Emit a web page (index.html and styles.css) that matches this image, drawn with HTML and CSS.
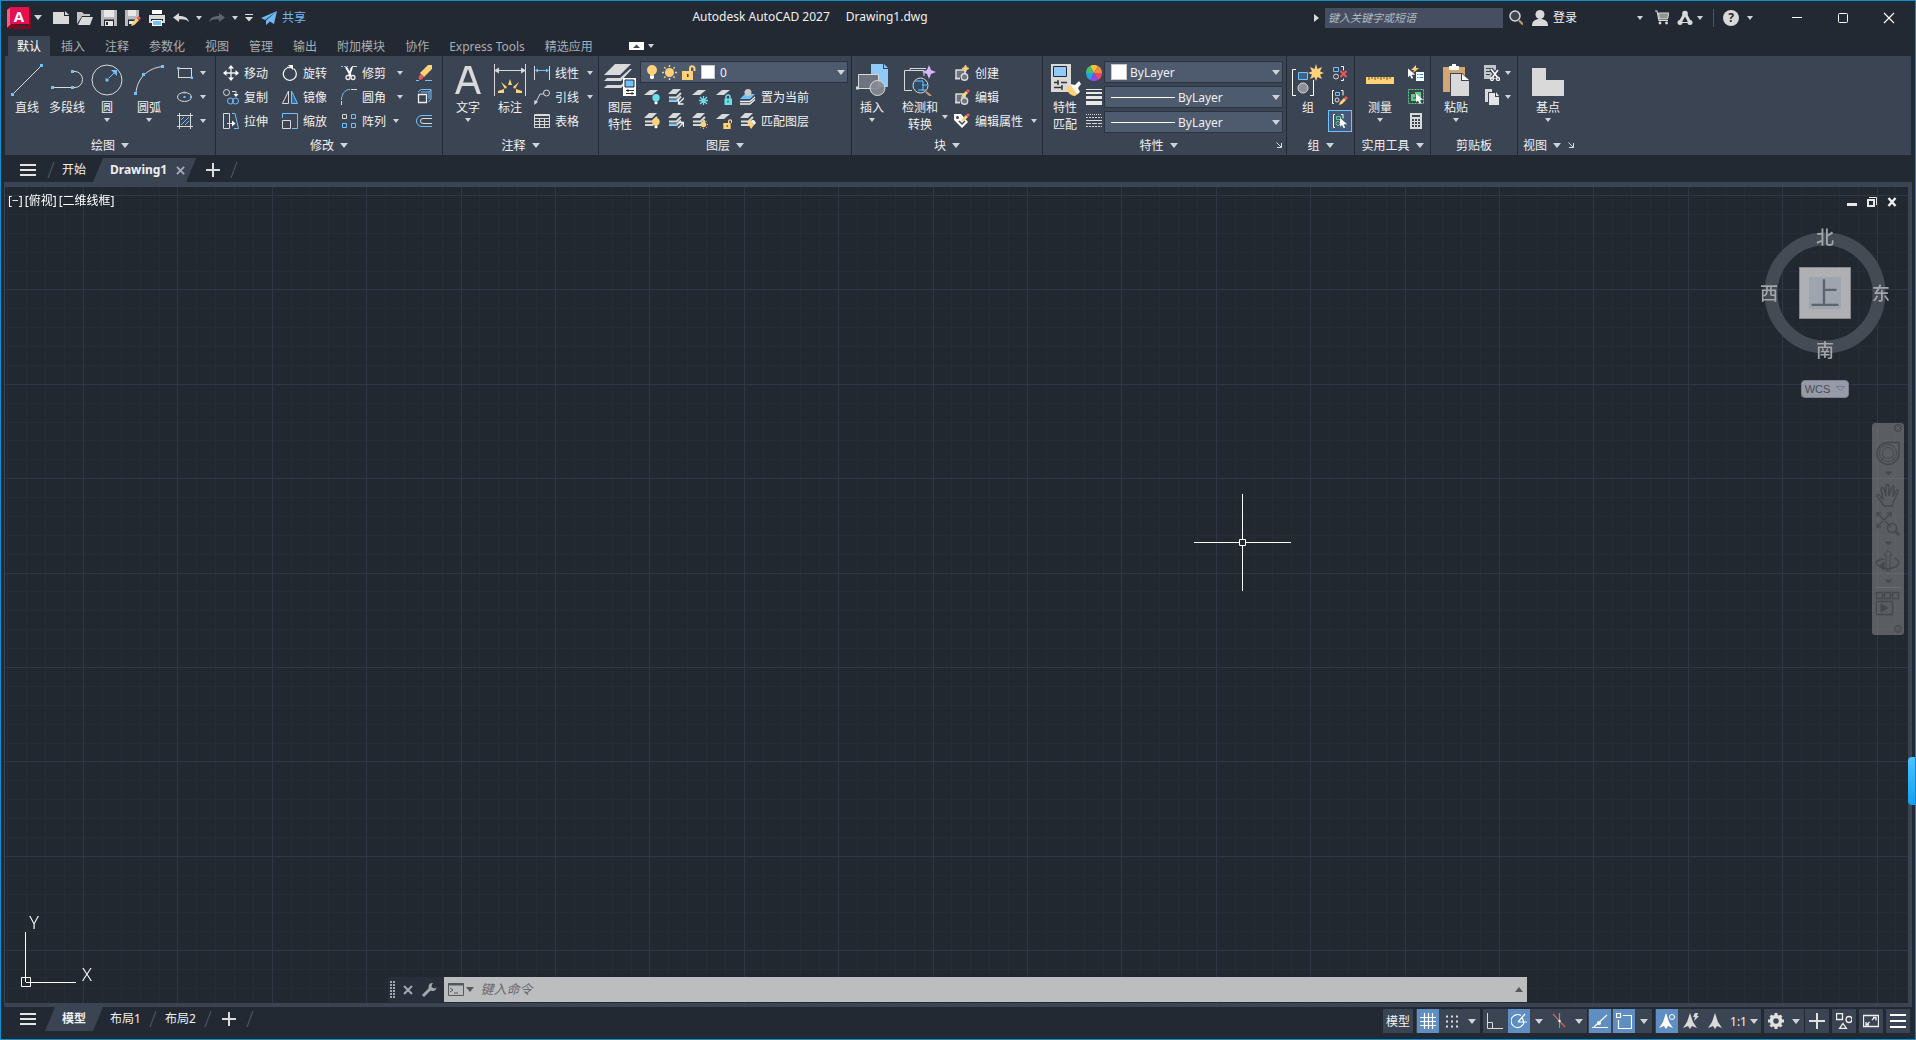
FILE: index.html
```html
<!DOCTYPE html>
<html lang="zh-CN">
<head>
<meta charset="utf-8">
<title>Autodesk AutoCAD 2027 - Drawing1.dwg</title>
<link rel="stylesheet" href="styles.css">
</head>
<body>
<svg class="defs" aria-hidden="true">
  <symbol id="caret-s" viewBox="0 0 6 4"><path d="M0 0h6L3 4z" fill="currentColor"/></symbol>
  <symbol id="caret-m" viewBox="0 0 8 5"><path d="M0 0h8L4 5z" fill="currentColor"/></symbol>
  <symbol id="slash" viewBox="0 0 8 18"><path d="M1 17L7 1" stroke="#4b5463" stroke-width="1.2"/></symbol>
  <symbol id="plus" viewBox="0 0 14 14"><path d="M7 0v14M0 7h14" stroke="#dcdcdc" stroke-width="2"/></symbol>
  <symbol id="menu" viewBox="0 0 16 12"><path d="M0 1h16M0 6h16M0 11h16" stroke="#e4e4e4" stroke-width="2"/></symbol>
  <symbol id="launch" viewBox="0 0 6 6"><path d="M.5 .5L5 5M5.500 1v4.500H1" fill="none" stroke="#dcdcdc"/></symbol>
  <symbol id="layer1" viewBox="0 0 16 16"><path d="M6 1h8L8 6H0z" fill="#d9d9d9"/></symbol>
  <symbol id="layer3" viewBox="0 0 16 16"><path d="M5 0h8L8 5H0z" fill="#d9d9d9"/><path d="M1 8.500h7.500L13 4M1 12h7.500L13 7.500" fill="none" stroke="#d9d9d9" stroke-width="2"/></symbol>
  <symbol id="bulb" viewBox="0 0 10 15"><circle cx="5" cy="5" r="5"/><path d="M3 9h4v2H3z"/><path d="M3 11h4v2l-1 1H4l-1-1z" fill="#fff"/></symbol>
  <symbol id="sun" viewBox="0 0 15 15"><circle cx="7.500" cy="7.500" r="4.500"/><path d="M7.500 0v2M7.500 13v2M0 7.500h2M13 7.500h2M2.200 2.200l1.400 1.400M11.400 11.400l1.400 1.400M12.800 2.200l-1.400 1.400M3.600 11.400l-1.400 1.400" stroke="#ffd27a" stroke-width="1.400"/></symbol>
  <symbol id="unlock" viewBox="0 0 14 15"><path d="M8 7V3.500a2 2 0 0 1 4.500 0V6" fill="none" stroke="#ffd27a" stroke-width="2"/><path d="M0 6h11v9H0z"/><path d="M5 9h1.500v3H5z" fill="#3b4453"/></symbol>
  <symbol id="cursor" viewBox="0 0 10 14"><path d="M0 0v11l2.500-2.200L4.500 13l2-1-2-4H9z" fill="#fff"/></symbol>
  <symbol id="pencil" viewBox="0 0 9 9"><path d="M0 9l1-3L5 2l2 2-4 4z" fill="#ffd27a"/><path d="M5 2l2-2 2 2-2 2z" fill="#f0555b"/></symbol>
  <symbol id="blk" viewBox="0 0 16 16"><path d="M2 13V5h9v6" fill="#6d7480" stroke="#d9d9d9" stroke-width="1.500"/><path d="M1 13.500h5" stroke="#d9d9d9" stroke-width="2"/><circle cx="10.500" cy="12" r="3.200" fill="#6d7480" stroke="#d9d9d9" stroke-width="1.400"/></symbol>
</svg>

<header class="titlebar">
  <div class="quick">
    <button class="app" aria-label="应用程序菜单">
      <svg width="24" height="22" viewBox="0 0 24 22"><path d="M0 3L4 0v18L0 21z" fill="#ff5a83"/><path d="M0 21l4-4 20 2v3H2z" fill="#7d0a25"/><path d="M21 1l3 2v17h-3z" fill="#7d0a25"/><path d="M3 0h19v17H3z" fill="#e51050"/><text x="12" y="15" text-anchor="middle" class="logo-a">A</text></svg>
      <svg class="cm"><use href="#caret-m"/></svg>
    </button>
    <button class="tool" aria-label="新建"><svg class="i16" viewBox="0 0 16 16"><path d="M0 2h11v4h5v8H0z" fill="#d9d9d9"/><path d="M12 1l4 4h-4z" fill="#d9d9d9"/></svg></button>
    <button class="tool" aria-label="打开"><svg class="i16" viewBox="0 0 16 16"><path d="M0 14V2h5l2 2h6v2H5z" fill="#c4c4c4"/><path d="M5 7h11l-3 8H1z" fill="#d9d9d9"/></svg></button>
    <button class="tool" aria-label="保存"><svg class="i16" viewBox="0 0 16 16"><path d="M0 0h16v16H0z" fill="#b9b9b9"/><path d="M3 0h10v7H3z" fill="#e8e8e8"/><path d="M3 9.500h10V16H3z" fill="#222933"/><path d="M4 11h8v5H4z" fill="#e8e8e8"/><path d="M5 12h2v3H5z" fill="#222933"/></svg></button>
    <button class="tool" aria-label="另存为"><svg class="i16" viewBox="0 0 16 16"><path d="M0 0h14v8l-6 8H0z" fill="#b9b9b9"/><path d="M3 0h8v6H3z" fill="#e8e8e8"/><path d="M3 9.500h7V16H3z" fill="#222933"/><path d="M4 11h5v3H4z" fill="#e8e8e8"/><svg x="6" y="6" width="10" height="10"><use href="#pencil"/></svg></svg></button>
    <button class="tool" aria-label="打印"><svg class="i16" viewBox="0 0 16 16"><path d="M3 0h10v4H3z" fill="#fff"/><path d="M0 5h16v8H0z" fill="#d9d9d9"/><path d="M2 9h12v2H2z" fill="#222933"/><path d="M3 10h10v6H3z" fill="#fff"/><path d="M4 11h8v4H4z" fill="#6fc1ff"/></svg></button>
    <button class="tool" aria-label="放弃"><svg class="i16" viewBox="0 0 16 16"><path d="M0 7.500L6 3v3c5 0 9 1.500 10 6-2.500-2.500-6-3-10-2.500V12z" fill="#d9d9d9"/></svg></button>
    <button class="drop" aria-label="放弃列表"><svg class="cs"><use href="#caret-s"/></svg></button>
    <button class="tool" aria-label="重做"><svg class="i16" viewBox="0 0 16 16"><path d="M16 7.500L10 3v3C5 6 1 7.500 0 12c2.500-2.500 6-3 10-2.500V12z" fill="#5f656d"/></svg></button>
    <button class="drop" aria-label="重做列表"><svg class="cs"><use href="#caret-s"/></svg></button>
    <button class="custom" aria-label="自定义"><svg width="8" height="8" viewBox="0 0 8 8"><path d="M0 .5h8" stroke="#d9d9d9"/><path d="M0 3h8L4 7.500z" fill="#d9d9d9"/></svg></button>
    <button class="share"><svg class="i16" viewBox="0 0 16 16"><path d="M16 1L0 8l4 2zM16 1L5 10.500V15l3-2.500zM16 1L8 11l5 3z" fill="#6fb9f2"/></svg>共享</button>
  </div>
  <h1 class="caption"><span>Autodesk AutoCAD 2027</span><span>Drawing1.dwg</span></h1>
  <div class="infocenter">
    <svg width="5" height="8" viewBox="0 0 5 8"><path d="M0 0l5 4-5 4z" fill="#d9d9d9"/></svg>
    <input class="search" type="text" aria-label="搜索" placeholder="键入关键字或短语">
    <button aria-label="查找"><svg width="14" height="16" viewBox="0 0 14 16"><circle cx="6" cy="6" r="5" fill="#3f4650" stroke="#d9d9d9" stroke-width="1.500"/><path d="M10 10.500l4 4" stroke="#c99b6b" stroke-width="2"/></svg></button>
    <button class="login"><svg class="i16" viewBox="0 0 16 16"><circle cx="8" cy="4.500" r="4.500" fill="#d9d9d9"/><path d="M0 16c0-5 3-7 8-7s8 2 8 7z" fill="#d9d9d9"/></svg>登录</button>
    <button class="g-auto" aria-label="登录选项"><svg class="cs"><use href="#caret-s"/></svg></button>
    <button class="g12" aria-label="商店"><svg width="14" height="15" viewBox="0 0 14 15"><path d="M0 1h2l2 9.500h9" fill="none" stroke="#d9d9d9" stroke-width="1.200"/><path d="M3.500 3H14l-1.500 6h-8z" fill="#8f9398" stroke="#d9d9d9"/><circle cx="5" cy="13" r="1.400" fill="#d9d9d9"/><circle cx="11.500" cy="13" r="1.400" fill="#d9d9d9"/></svg></button>
    <button class="g8" aria-label="Autodesk App"><svg class="i16" viewBox="0 0 16 16"><path d="M8 3.500L3 12.500M8 3.500l5 9" stroke="#d9d9d9" stroke-width="3"/><circle cx="8" cy="3.500" r="2.800" fill="#d9d9d9"/><circle cx="3" cy="12.500" r="2.500" fill="#d9d9d9"/><circle cx="13" cy="12.500" r="2.500" fill="#d9d9d9"/><path d="M3 12.500h10" stroke="#d9d9d9"/></svg></button>
    <button class="g4" aria-label="App 选项"><svg class="cs"><use href="#caret-s"/></svg></button>
    <span class="vsep"></span>
    <button class="g8" aria-label="帮助"><svg class="i16" viewBox="0 0 16 16"><circle cx="8" cy="8" r="8" fill="#d9d9d9"/><text x="8" y="12" text-anchor="middle" class="q">?</text></svg></button>
    <button class="g8" aria-label="帮助选项"><svg class="cs"><use href="#caret-s"/></svg></button>
  </div>
  <div class="winbtns">
    <button aria-label="最小化"><svg width="12" height="12" viewBox="0 0 12 12"><path d="M1 5.500h10" stroke="#fff"/></svg></button>
    <button aria-label="最大化"><svg width="12" height="12" viewBox="0 0 12 12"><rect x="1.500" y="1.500" width="9" height="9" rx="1" fill="none" stroke="#fff"/></svg></button>
    <button aria-label="关闭"><svg width="12" height="12" viewBox="0 0 12 12"><path d="M1 1l10 10M11 1L1 11" stroke="#fff" stroke-width="1.200"/></svg></button>
  </div>
</header>

<nav class="tabs">
  <button class="tab on">默认</button><button class="tab">插入</button><button class="tab">注释</button><button class="tab">参数化</button><button class="tab">视图</button><button class="tab">管理</button><button class="tab">输出</button><button class="tab">附加模块</button><button class="tab">协作</button><button class="tab">Express Tools</button><button class="tab">精选应用</button>
  <button class="mini" aria-label="最小化功能区"><svg width="15" height="8" viewBox="0 0 15 8"><path d="M0 0h15v8H0z" fill="#fff"/><path d="M4 6h7L7.500 2.500z" fill="#444b55"/></svg><svg class="cs"><use href="#caret-s"/></svg></button>
</nav>

<div class="ribbon">
  <section class="panel p-draw">
    <div class="body">
      <button class="big"><svg class="i32" viewBox="0 0 32 32"><path d="M3 29L29 3" class="w"/><path d="M0 29h3v3H0zM29 0h3v3h-3z" class="fb"/></svg><span>直线</span></button>
      <button class="big"><svg class="i32" viewBox="0 0 32 32"><path d="M3 23.500h18M21 7.500h3a7.500 8 0 0 1 0 16h-3" class="w"/><path d="M0 22h3v3H0zM20 22h3v3h-3zM20 6h3v3h-3z" class="fb"/></svg><span>多段线</span></button>
      <button class="big"><svg class="i32" viewBox="0 0 32 32"><circle cx="16" cy="16" r="15" class="w"/><path d="M18 14l7-7" class="b"/><path d="M14.500 14.500h3v3h-3zM20 6h6v6z" class="fb"/></svg><span>圆</span><svg class="cs"><use href="#caret-s"/></svg></button>
      <button class="big w44"><svg class="i32" viewBox="0 0 32 32"><path d="M3 29C4 15 14 4 30 2.500" class="w"/><path d="M1 28h3v3H1zM9 9h3v3H9zM28 1h3v3h-3z" class="fb"/></svg><span>圆弧</span><svg class="cs"><use href="#caret-s"/></svg></button>
      <div class="col lead6">
        <button class="row" aria-label="矩形"><svg class="i16" viewBox="0 0 16 16"><rect x="1.500" y="3.500" width="13" height="9" class="w"/><path d="M0 2h2.500v2.500H0zM13.500 11.500H16V14h-2.500z" class="fb"/></svg><svg class="cs"><use href="#caret-s"/></svg></button>
        <button class="row" aria-label="椭圆"><svg class="i16" viewBox="0 0 16 16"><ellipse cx="7.500" cy="8" rx="7" ry="4.500" class="w"/><path d="M6.500 2.500h2v2h-2zM6.500 7h2v2h-2zM13 7h2v2h-2z" class="fb"/></svg><svg class="cs"><use href="#caret-s"/></svg></button>
        <button class="row" aria-label="图案填充"><svg class="i16" viewBox="0 0 16 16"><path d="M2.500 0v16M13.500 0v16M0 2.500h16M0 13.500h16" class="w"/><path d="M4 7l3-3M4 12l8-8M8 12l4-4" class="b"/></svg><svg class="cs"><use href="#caret-s"/></svg></button>
      </div>
    </div>
    <button class="ptitle">绘图<svg class="cm"><use href="#caret-m"/></svg></button>
  </section>

  <section class="panel p-modify">
    <div class="body">
      <div class="col w59">
        <button class="row"><svg class="i16" viewBox="0 0 16 16"><path d="M8 2v12M2 8h12" class="w2"/><path d="M8 0l3 3.500H5zM8 16l3-3.500H5zM0 8l3.500-3v6zM16 8l-3.500-3v6z" fill="#fff"/></svg>移动</button>
        <button class="row"><svg class="i16" viewBox="0 0 16 16"><circle cx="3.500" cy="3.500" r="3" class="w"/><path d="M9 2.500h4V6" class="w"/><path d="M10.500 5h5L13 8z" fill="#fff"/><circle cx="7.500" cy="12" r="3" class="b"/><circle cx="12.500" cy="12" r="3" class="b"/></svg>复制</button>
        <button class="row"><svg class="i16" viewBox="0 0 16 16"><path d="M.500 .500h6v15h-6z" class="w"/><path d="M9 .500h3l3.500 15H11" class="b"/><path d="M4 10.500h6" class="w"/><path d="M9 7.500l3.500 3-3.500 3z" fill="#fff"/></svg>拉伸</button>
      </div>
      <div class="col w59">
        <button class="row"><svg class="i16" viewBox="0 0 16 16"><path d="M5 3A6.500 6.500 0 1 0 11.500 3.500" class="w2"/><path d="M6 0h5v5z" fill="#fff"/><path d="M5 2.500h5" class="w2"/></svg>旋转</button>
        <button class="row"><svg class="i16" viewBox="0 0 16 16"><path d="M6.500 2v12.500H.500z" class="w"/><path d="M9.500 2v12.500h6z" fill="#2f6f9f" stroke="#6fc1ff"/></svg>镜像</button>
        <button class="row"><svg class="i16" viewBox="0 0 16 16"><path d="M.500 5V.500h15v15H10" class="b"/><path d="M.500 7.500h8v8h-8z" class="w"/></svg>缩放</button>
      </div>
      <div class="col w75">
        <button class="row far"><svg class="i16" viewBox="0 0 16 16"><path d="M0 1.500h7" stroke="#6fc1ff" stroke-dasharray="2 1"/><path d="M11 1.500h5" class="w"/><path d="M5 2l5 9M11 2L8 11" stroke="#fff" stroke-width="2"/><circle cx="7" cy="12.500" r="2" class="w2"/><circle cx="12" cy="12.500" r="2" class="w2"/></svg>修剪<svg class="cs"><use href="#caret-s"/></svg></button>
        <button class="row far"><svg class="i16" viewBox="0 0 16 16"><path d="M.500 16v-4M10 .500h6" class="w"/><path d="M.500 11C.500 5 4 .500 9 .500" class="b"/></svg>圆角<svg class="cs"><use href="#caret-s"/></svg></button>
        <button class="row"><svg class="i16" viewBox="0 0 16 16"><path d="M1.500 1.500h4v4h-4z" class="w"/><path d="M10.500 1.500h4v4h-4zM1.500 10.500h4v4h-4zM10.500 10.500h4v4h-4z" class="b"/></svg>阵列<svg class="cs"><use href="#caret-s"/></svg></button>
      </div>
      <div class="col">
        <button class="row" aria-label="删除"><svg class="i16" viewBox="0 0 16 16"><path d="M0 15.500h3M9 15.500h7" class="b"/><path d="M16 0v4l-8 8-4-4 8-8z" fill="#ffd27a"/><path d="M5 9l3 3-3 3c-2 0-3-2-2-4z" fill="#f0555b"/></svg></button>
        <button class="row" aria-label="分解"><svg class="i16" viewBox="0 0 16 16"><path d="M2.500 5.500h8v8h-8z" class="w2"/><path d="M2 3L5 .500h10V10l-2.500 3M5 3h8v7M13 3l2-2" class="b"/></svg></button>
        <button class="row" aria-label="偏移"><svg class="i16" viewBox="0 0 16 16"><path d="M16 2.500H6a5.500 5.500 0 0 0 0 11h10" class="b"/><path d="M16 5.500H7a2.500 2.500 0 0 0 0 5h9" class="w"/></svg></button>
      </div>
    </div>
    <button class="ptitle">修改<svg class="cm"><use href="#caret-m"/></svg></button>
  </section>

  <section class="panel p-note">
    <div class="body">
      <button class="big"><svg class="i32" viewBox="0 0 32 32"><path d="M3 30L13 2h6l10 28h-4l-3-8H10l-3 8zM11 18.500h10L16 5z" fill="#d9d9d9" fill-rule="evenodd"/></svg><span>文字</span><svg class="cs"><use href="#caret-s"/></svg></button>
      <button class="big w44"><svg class="i32" viewBox="0 0 32 32"><path d="M.500 0v32M31.500 0v32M3 6.500h26" class="w"/><path d="M0 6.500l5-3v6zM32 6.500l-5-3v6z" class="fw"/><path d="M16 15l2 6h-4zM7 18l6 5-2 2zM25 18l-6 5 2 2zM4 27l6-2v4H4zM28 27l-6-2v4h6z" class="fy"/></svg><span>标注</span></button>
      <div class="col lead2">
        <button class="row g3"><svg class="i16" viewBox="0 0 16 16"><path d="M.500 1v14M15.500 1v14" class="w"/><path d="M2 5.500h12" class="b"/><path d="M1 5.500l3-2v4zM15 5.500l-3-2v4z" class="fb"/></svg>线性<svg class="cs"><use href="#caret-s"/></svg></button>
        <button class="row g3"><svg class="i16" viewBox="0 0 16 16"><circle cx="12.500" cy="4" r="3" class="w"/><path d="M9.500 5H6l-4 8" class="w"/><path d="M0 16l.500-5L4 13z" class="fw"/></svg>引线<svg class="cs"><use href="#caret-s"/></svg></button>
        <button class="row"><svg class="i16" viewBox="0 0 16 16"><path d="M.500 1.500h15v13H.500zM0 2.500h16M0 5.500h16M0 8.500h16M0 11.500h16M5.500 5v9M10.500 5v9" class="w"/></svg>表格</button>
      </div>
    </div>
    <button class="ptitle">注释<svg class="cm"><use href="#caret-m"/></svg></button>
  </section>

  <section class="panel p-layer">
    <div class="body">
      <button class="big"><svg class="i32" viewBox="0 0 32 32"><path d="M11 0h16L16 11H0zM0 17l3-3h13L26 5h2L17 17zM0 24l3-3h14l5-5v4l-5 4z" class="fw"/><path d="M19 14h13v18H19z" fill="#fff"/><path d="M21 16h9v7h-9z" fill="#6fc1ff" stroke="#222933"/><path d="M22 26.500h8M22 29.500h8M24 25v3M28 28v3" stroke="#333"/></svg><span>图层<br>特性</span></button>
      <div class="col fill">
        <label class="combo layers">
          <svg width="10" height="15" fill="#ffd27a"><use href="#bulb"/></svg>
          <svg width="15" height="15" fill="#ffd27a"><use href="#sun"/></svg>
          <svg width="14" height="15" fill="#ffd27a"><use href="#unlock"/></svg>
          <span class="swatch s14"></span>
          <select aria-label="图层"><option>0</option></select>
          <svg class="cm"><use href="#caret-m"/></svg>
        </label>
        <div class="line">
          <button class="row sq" aria-label="关"><svg class="i16" viewBox="0 0 16 16"><use href="#layer1"/><svg x="8" y="5" width="8" height="11" fill="#6be0e8"><use href="#bulb"/></svg></svg></button>
          <button class="row sq" aria-label="隔离"><svg class="i16" viewBox="0 0 16 16"><use href="#layer3"/><path d="M1 11.500h8" stroke="#6fc1ff" stroke-width="2"/><path d="M16 9l-5 5M10.500 10v5h5" class="w2"/></svg></button>
          <button class="row sq" aria-label="冻结"><svg class="i16" viewBox="0 0 16 16"><use href="#layer1"/><path d="M11.500 7v9M7 11.500h9M8 8l7 7M15 8l-7 7" stroke="#6be0e8" stroke-width="1.300"/></svg></button>
          <button class="row sq" aria-label="锁定"><svg class="i16" viewBox="0 0 16 16"><use href="#layer1"/><path d="M10 10V8a2 2 0 0 1 4 0v2" fill="none" stroke="#6be0e8" stroke-width="1.500"/><path d="M8.500 9.500H16V16H8.500z" fill="#6be0e8"/><path d="M12 11.500v2" stroke="#333"/></svg></button>
          <button class="row sq wide"><svg class="i16" viewBox="0 0 16 16"><path d="M0 10l5-5h10l-5 5z" fill="#6fc1ff"/><circle cx="8" cy="3.500" r="3.500" fill="#c9c9c9"/><path d="M0 12.500h10L15 8M0 15h10l5-4.500" class="w2"/></svg>置为当前</button>
        </div>
        <div class="line">
          <button class="row sq" aria-label="打开所有图层"><svg class="i16" viewBox="0 0 16 16"><use href="#layer3"/><svg x="8" y="5" width="8" height="11" fill="#ffd27a"><use href="#bulb"/></svg></svg></button>
          <button class="row sq" aria-label="取消隔离"><svg class="i16" viewBox="0 0 16 16"><use href="#layer3"/><path d="M1 11.500h8" stroke="#6fc1ff" stroke-width="2"/><path d="M10 15l5-5M11 9.500h4.500V14" class="w2"/></svg></button>
          <button class="row sq" aria-label="解冻所有图层"><svg class="i16" viewBox="0 0 16 16"><use href="#layer3"/><svg x="7" y="7" width="9" height="9" fill="#ffd27a"><use href="#sun"/></svg></svg></button>
          <button class="row sq" aria-label="解锁"><svg class="i16" viewBox="0 0 16 16"><use href="#layer1"/><svg x="7" y="6" width="10" height="10" fill="#ffd27a"><use href="#unlock"/></svg></svg></button>
          <button class="row sq wide"><svg class="i16" viewBox="0 0 16 16"><use href="#layer3"/><path d="M7 9l3-2 4 5-3 4z" class="fy"/><path d="M11 8l3-1 2 3-2 2z" fill="#fff"/></svg>匹配图层</button>
        </div>
      </div>
    </div>
    <button class="ptitle">图层<svg class="cm"><use href="#caret-m"/></svg></button>
  </section>

  <section class="panel p-block">
    <div class="body">
      <button class="big"><svg class="i32" viewBox="0 0 32 32"><path d="M15 0h12v5h5v18H15z" fill="#8fcaf8"/><path d="M28 0l4 4h-4z" fill="#8fcaf8"/><path d="M2.500 24V10.500h20v14h-21" fill="#6d7480" stroke="#d9d9d9"/><path d="M0 22.500h3v3H0z" class="fw"/><circle cx="21.500" cy="24" r="7.500" fill="#868b93" fill-opacity=".9" stroke="#d9d9d9"/></svg><span>插入</span><svg class="cs"><use href="#caret-s"/></svg></button>
      <button class="big w56 side"><svg class="i32" viewBox="0 0 32 32"><path d="M6 6V4.500h16M8 26.500H.500v-20H20V12" class="w"/><circle cx="16.500" cy="21.500" r="7.500" fill="#2f4a62" stroke="#d9d9d9"/><path d="M11 17h8v10M14 26h8M18 21h5" class="b"/><path d="M22 28l5 4" stroke="#c99b6b" stroke-width="2"/><path d="M25 1l2 5 5 2-5 2-2 5-2-5-5-2 5-2z" fill="#d6b8f5"/></svg><span>检测和<br>转换</span><svg class="cs"><use href="#caret-s"/></svg></button>
      <div class="col lead6">
        <button class="row"><svg class="i16" viewBox="0 0 16 16"><use href="#blk"/><path d="M11.500 0l1 2.500L15 3.500l-2.500 1-1 3-1-3-2.500-1 2.500-1z" class="fy" stroke="#ffd27a"/></svg>创建</button>
        <button class="row"><svg class="i16" viewBox="0 0 16 16"><use href="#blk"/><svg x="7" y="0" width="9" height="9"><use href="#pencil"/></svg></svg>编辑</button>
        <button class="row g3"><svg class="i16" viewBox="0 0 16 16"><path d="M0 1h7l7 8-6 6L0 7z" fill="#fff"/><circle cx="3.500" cy="4.500" r="1.500" fill="#3b4453"/><path d="M5 8l3 3 3-3" fill="none" stroke="#3b4453" stroke-width="1.500"/><svg x="7" y="0" width="9" height="9"><use href="#pencil"/></svg></svg>编辑属性<svg class="cs"><use href="#caret-s"/></svg></button>
      </div>
    </div>
    <button class="ptitle">块<svg class="cm"><use href="#caret-m"/></svg></button>
  </section>

  <section class="panel p-prop">
    <div class="body">
      <button class="big"><svg class="i32" viewBox="0 0 32 32"><path d="M2 0h20v28H2z" class="fw"/><path d="M4.500 2.500h13v10h-13z" fill="#8fcaf8" stroke="#222933"/><path d="M5 18.500h5M12 18.500h6M9 16v5M5 23.500h8M13 21v5" stroke="#333" stroke-width="1.400"/><path d="M16 25l6-4 8 8-4 3c-5 0-6-4-10-7z" class="fy"/><path d="M21 20l5 1 4-4 2 3-3 4 2 4-3 2z" fill="#fff"/></svg><span>特性<br>匹配</span></button>
      <div class="col icons">
        <span class="row"><svg class="i16" viewBox="0 0 16 16"><path d="M8 8L4 1a8 8 0 0 1 8 0z" fill="#f9c23c"/><path d="M8 8l4-7a8 8 0 0 1 4 7z" fill="#f98a3c"/><path d="M8 8h8a8 8 0 0 1-4 7z" fill="#ea4a6a"/><path d="M8 8l4 7a8 8 0 0 1-8 0z" fill="#8a4af0"/><path d="M8 8l-4 7a8 8 0 0 1-4-7z" fill="#1fa8e0"/><path d="M8 8H0a8 8 0 0 1 4-7z" fill="#4cbf6a"/></svg></span>
        <span class="row"><svg class="i16" viewBox="0 0 16 16"><path d="M0 0h16v1H0zM0 3h16v2H0zM0 7h16v3H0zM0 12h16v4H0z" fill="#e8e8e8"/></svg></span>
        <span class="row"><svg class="i16" viewBox="0 0 16 16"><path d="M0 1.500h16" stroke="#d9d9d9" stroke-dasharray="1 1"/><path d="M0 4.500h16M0 13.500h16" stroke="#d9d9d9" stroke-dasharray="2 1"/><path d="M0 7.500h16" class="w"/><path d="M0 10.500h16" stroke="#d9d9d9" stroke-dasharray="5 1"/></svg></span>
      </div>
      <div class="col fill">
        <label class="combo"><span class="swatch s16"></span><select aria-label="对象颜色"><option>ByLayer</option></select><svg class="cm"><use href="#caret-m"/></svg></label>
        <label class="combo"><span class="rule"></span><select aria-label="线宽"><option>ByLayer</option></select><svg class="cm"><use href="#caret-m"/></svg></label>
        <label class="combo"><span class="rule"></span><select aria-label="线型"><option>ByLayer</option></select><svg class="cm"><use href="#caret-m"/></svg></label>
      </div>
    </div>
    <div class="foot"><button class="ptitle">特性<svg class="cm"><use href="#caret-m"/></svg></button><button class="launch" aria-label="特性选项板"><svg width="6" height="6"><use href="#launch"/></svg></button></div>
  </section>

  <section class="panel p-group">
    <div class="body">
      <button class="big"><svg class="i32" viewBox="0 0 32 32"><path d="M4 5.500H.500v26H4M18 31.500h3.500V16" stroke="#fff" fill="none"/><path d="M6.500 8.500h9v7h-9z" fill="#3d6488" stroke="#6fc1ff"/><circle cx="11" cy="24" r="5" fill="#8a8f96" stroke="#d9d9d9"/><path d="M24 0l1.500 5L30 3l-2 4.500L32 9l-4 1.500L30 15l-4.500-2L24 17l-1.500-4L18 15l2-4.500L16 9l4-1.500L18 3l4.500 2z" class="fy"/></svg><span>组</span></button>
      <div class="col">
        <button class="row sq" aria-label="解除编组"><svg class="i16" viewBox="0 0 16 16"><path d="M1.500 2.500h5v4h-5z" class="b"/><circle cx="4" cy="11.500" r="2.500" class="w"/><path d="M9 1.500h2.500v4M9 15.500h2.500v-2" stroke="#fff" fill="none"/><path d="M8.500 6l6 6M14.500 6l-6 6" stroke="#f0555b" stroke-width="2"/></svg></button>
        <button class="row sq" aria-label="组编辑"><svg class="i16" viewBox="0 0 16 16"><path d="M2 1.500H.500v13H2M9 1.500h2v5" stroke="#fff" fill="none"/><path d="M3.500 3.500h4v3h-4z" class="b"/><circle cx="5" cy="11" r="2" class="w"/><svg x="7" y="7" width="9" height="9"><use href="#pencil"/></svg></svg></button>
        <button class="row sq active" aria-label="启用/禁用组选择"><svg class="i16" viewBox="0 0 16 16"><path d="M3 1.500H1.500v13H3M9 1.500h2v4" stroke="#fff" fill="none"/><path d="M4.500 3.500h4v3h-4z" fill="none" stroke="#5fd07f"/><circle cx="6" cy="10.500" r="2" fill="none" stroke="#5fd07f"/><svg x="8" y="5" width="8" height="11"><use href="#cursor"/></svg></svg></button>
      </div>
    </div>
    <button class="ptitle">组<svg class="cm"><use href="#caret-m"/></svg></button>
  </section>

  <section class="panel p-util">
    <div class="body">
      <button class="big w44"><svg class="i32" viewBox="0 0 32 32"><path d="M2 13h28v7H2z" class="fy"/><path d="M5 13v3M8 13v2M11 13v3M14 13v2M17 13v3M20 13v2M23 13v3M26 13v2" stroke="#6b5320"/></svg><span>测量</span><svg class="cs"><use href="#caret-s"/></svg></button>
      <div class="col lead6">
        <button class="row" aria-label="快速选择"><svg class="i16" viewBox="0 0 16 16"><svg x="0" y="3" width="8" height="12"><use href="#cursor"/></svg><path d="M8 0L3 5h3L5 8l6-5H8z" class="fy"/><path d="M8 7h8v9H8z" fill="#fff"/><path d="M9 9.500h1.500M11.500 9.500H15M9 12.500h1.500M11.500 12.500H15" stroke="#2f8fd8"/></svg></button>
        <button class="row" aria-label="全部选择"><svg class="i16" viewBox="0 0 16 16"><path d="M.500 .500h15v14H.500z" fill="none" stroke="#5fd07f" stroke-dasharray="2 1"/><path d="M3 5h4V3h6v9H3z" fill="#5fd07f"/><path d="M8 5v4h-3" stroke="#3b4453" fill="none"/><svg x="8" y="4" width="8" height="12"><use href="#cursor"/></svg></svg></button>
        <button class="row" aria-label="快速计算器"><svg class="i16" viewBox="0 0 16 16"><path d="M2 0h12v16H2z" class="fw"/><path d="M4 2h8v2H4zM4 6h2v2H4zM7 6h2v2H7zM10 6h2v2h-2zM4 9h2v2H4zM7 9h2v2H7zM10 9h2v2h-2zM4 12h2v2H4zM7 12h2v2H7zM10 12h2v2h-2z" fill="#3b4453"/></svg></button>
      </div>
    </div>
    <button class="ptitle">实用工具<svg class="cm"><use href="#caret-m"/></svg></button>
  </section>

  <section class="panel p-clip">
    <div class="body">
      <button class="big w44"><svg class="i32" viewBox="0 0 32 32"><path d="M3 3h22v25H3z" fill="#d3a673"/><path d="M9 2h3V0h4v2h3v4H9z" fill="#fff"/><path d="M10 9h12l7 7v16H10z" fill="#3b4453"/><path d="M11 10h10v7h8v15H11z" class="fw"/><path d="M22 10l7 6h-7z" fill="#fff"/></svg><span>粘贴</span><svg class="cs"><use href="#caret-s"/></svg></button>
      <div class="col lead6">
        <button class="row tight" aria-label="剪切"><svg class="i16" viewBox="0 0 16 16"><path d="M0 0h12v14H0z" fill="#c4c7ca"/><path d="M2 3.500h6M2 6.500h5M2 9.500h4" stroke="#3b4453"/><path d="M7 4l7 9M14 5l-6 8" stroke="#3b4453" stroke-width="4"/><path d="M7 4l7 9M14 5l-6 8" stroke="#fff" stroke-width="1.500"/><circle cx="8" cy="14" r="1.500" class="w2"/><circle cx="14" cy="14" r="1.500" class="w2"/></svg><svg class="cs"><use href="#caret-s"/></svg></button>
        <button class="row tight" aria-label="复制剪裁"><svg class="i16" viewBox="0 0 16 16"><path d="M1 0h7v3H4v10H1z" class="fw"/><path d="M5 4h6v4h4v8H5zM12 3l3 4h-3z" fill="#e4e4e4"/></svg><svg class="cs"><use href="#caret-s"/></svg></button>
      </div>
    </div>
    <button class="ptitle">剪贴板</button>
  </section>

  <section class="panel p-view">
    <div class="body">
      <button class="big w56"><svg class="i32" viewBox="0 0 32 32"><path d="M0 4h14v12h18v16H0z" class="fw"/></svg><span>基点</span><svg class="cs"><use href="#caret-s"/></svg></button>
    </div>
    <div class="foot"><button class="ptitle">视图<svg class="cm"><use href="#caret-m"/></svg></button><button class="launch" aria-label="视图设置"><svg width="6" height="6"><use href="#launch"/></svg></button></div>
  </section>
</div>

<nav class="files">
  <button class="burger" aria-label="文件选项卡菜单"><svg width="16" height="12"><use href="#menu"/></svg></button>
  <svg class="slash"><use href="#slash"/></svg>
  <a class="file" href="#start">开始</a>
  <a class="file cur" href="#drawing1">Drawing1<svg width="9" height="9" viewBox="0 0 10 10"><path d="M1 1l8 8M9 1L1 9" stroke="#a9adb3" stroke-width="2"/></svg></a>
  <button class="add" aria-label="新图形"><svg width="14" height="14"><use href="#plus"/></svg></button>
  <svg class="slash"><use href="#slash"/></svg>
</nav>

<main class="view" id="view">
  <canvas id="grid"></canvas>
  <div class="vplabel"><button>[−]</button><button>[俯视]</button><button>[二维线框]</button></div>
  <div class="vpbtns">
    <button aria-label="最小化视口"><svg width="10" height="10" viewBox="0 0 10 10"><path d="M0 6h10v3H0z" fill="#e6e6e6"/></svg></button>
    <button aria-label="还原视口"><svg width="10" height="10" viewBox="0 0 10 10"><path d="M2 .500h7.500V8" fill="none" stroke="#e6e6e6"/><path d="M1 3h6v6H1z" fill="none" stroke="#e6e6e6" stroke-width="2"/></svg></button>
    <button aria-label="关闭视口"><svg width="10" height="10" viewBox="0 0 10 10"><path d="M1.500 1l7 8M8.500 1l-7 8" stroke="#f0f0f0" stroke-width="2.400"/></svg></button>
  </div>
  <div class="cube">
    <svg width="132" height="132" viewBox="0 0 132 132">
      <circle cx="66" cy="66" r="54" fill="none" stroke="#454b54" stroke-width="13"/>
      <rect x="40.500" y="40.500" width="51" height="51" fill="#aeb0b3" stroke="#85878a"/>
      <rect x="50" y="50" width="32" height="32" fill="#9fa5ae"/>
      <text x="66" y="77" class="top">上</text>
      <text x="66" y="17" class="dir">北</text><text x="66" y="130" class="dir">南</text><text x="10" y="73" class="dir">西</text><text x="122" y="73" class="dir">东</text>
    </svg>
    <button class="wcs">WCS<svg width="9" height="6" viewBox="0 0 9 6"><path d="M.500 .500h8l-4 4.500z" fill="none" stroke="#797c86"/></svg></button>
  </div>
  <div class="navbar">
    <button aria-label="关闭导航栏"><svg width="32" height="12" viewBox="0 0 32 12"><circle cx="26" cy="5" r="4" fill="#484d52" stroke="none"/><path d="M24 3l4 4M28 3l-4 4" stroke="#63676c"/></svg></button>
    <button aria-label="全导航控制盘"><svg width="32" height="34" viewBox="0 12 32 34"><path d="M27 19.500v11a11 11 0 1 1-11-11z" stroke-width="1.400"/><circle cx="16" cy="30" r="8.500"/><circle cx="16" cy="30" r="5.500"/><path d="M9 38l3-4M23 38l-3-4"/></svg></button>
    <button aria-label="控制盘选项"><svg width="32" height="9" viewBox="0 46 32 9"><path d="M13.500 49h6l-3 3z" fill="#44494f"/></svg></button>
    <button aria-label="平移"><svg width="32" height="31" viewBox="0 55 32 31"><path d="M12 83c-2-4-5-6-7-10-1-2 2-2 3 0l3 3-2-10c0-2 2-2 3 0l2 7V63c0-2 3-2 3 0v10l3-9c1-2 3-1 2 1l-1 9 3-6c1-2 3-1 2 1l-4 9-2 5z" stroke-width="1.400"/></svg></button>
    <button aria-label="范围缩放"><svg width="32" height="30" viewBox="0 86 32 30"><path d="M5 90l14 14M19 90L5 104M5 94v-4h4M15 90h4v4M5 100v4h4" stroke-width="1.400"/><circle cx="20" cy="105" r="4.500" stroke-width="1.500"/><path d="M23 108l4 4" stroke-width="3"/></svg></button>
    <button aria-label="缩放选项"><svg width="32" height="8" viewBox="0 116 32 8"><path d="M13.500 119h6l-3 3z" fill="#44494f"/></svg></button>
    <button aria-label="动态观察"><svg width="32" height="29" viewBox="0 124 32 29"><path d="M14 148v-16h-2l4-5 4 5h-2v16z"/><path d="M22 135c6 2 6 7 1 9-4 2-10 2-15 0M12 136c-8 1-10 4-5 7" stroke-width="1.500"/><path d="M7 143l5-4v8z" fill="#44494f"/></svg></button>
    <button aria-label="动态观察选项"><svg width="32" height="9" viewBox="0 153 32 9"><path d="M13.500 157h6l-3 3z" fill="#44494f"/></svg></button>
    <button aria-label="ShowMotion"><svg width="32" height="38" viewBox="0 162 32 38"><path d="M3 164.500h26" stroke="#6a6e72"/><path d="M4.500 169.500h6v6h-6zM12.500 169.500h6v6h-6zM20.500 169.500h6v6h-6zM4.500 178.500h16v13h-16z" stroke-width="1.400"/><path d="M9 181l7 4-7 4z" fill="#44494f"/></svg></button>
    <button aria-label="导航栏选项"><svg width="32" height="12" viewBox="0 200 32 12"><circle cx="26" cy="206" r="4" fill="#484d52" stroke="none"/><path d="M23.500 205h5M23.500 207h5" stroke="#63676c"/></svg></button>
  </div>
  <svg class="cross" width="97" height="97" viewBox="0 0 97 97"><path d="M0 48.500h45M52 48.500h45M48.500 0v45M48.500 52v45M45.500 45.500h6v6h-6z" fill="none" stroke="#fff"/></svg>
  <svg class="ucs" width="76" height="76" viewBox="0 0 76 76"><path d="M4.500 18v50M5 68.500h50M.500 63.500h9v9h-9z" fill="none" stroke="#fff"/><text x="13" y="15" text-anchor="middle">Y</text><text x="66" y="67" text-anchor="middle">X</text></svg>
  <div class="cmd">
    <div class="cmdtools">
      <svg width="5" height="18" viewBox="0 0 5 18"><path d="M1 0v18M4 0v18" stroke="#a4a8ad" stroke-width="2" stroke-dasharray="2 1"/></svg>
      <button aria-label="关闭命令行"><svg width="10" height="10" viewBox="0 0 10 10"><path d="M1 1l8 8M9 1L1 9" stroke="#a4a8ad" stroke-width="2"/></svg></button>
      <button aria-label="自定义命令行"><svg width="16" height="16" viewBox="0 0 16 16"><path d="M2 14l8-8" stroke="#a4a8ad" stroke-width="3"/><path d="M12 1a4 4 0 1 0 3.500 4.500L13 6.500 10.500 5 11 2.500z" fill="#a4a8ad"/></svg></button>
    </div>
    <label class="cmdbox">
      <svg width="16" height="13" viewBox="0 0 16 13"><path d="M.500 .500h15v12H.500z" fill="none" stroke="#55585c"/><path d="M0 1.500h16" stroke="#55585c" stroke-width="2"/><path d="M2 5l3 2-3 2M6 10h4" fill="none" stroke="#55585c"/></svg>
      <svg class="cm"><use href="#caret-m"/></svg>
      <input type="text" aria-label="命令行" placeholder="键入命令">
      <svg width="8" height="5" viewBox="0 0 8 5"><path d="M0 5h8L4 0z" fill="#55585c"/></svg>
    </label>
  </div>
</main>

<footer class="status">
  <nav class="layouts">
    <button class="burger" aria-label="布局菜单"><svg width="16" height="12"><use href="#menu"/></svg></button>
    <a class="layout cur" href="#model">模型</a>
    <a class="layout" href="#layout1">布局1</a><svg class="slash"><use href="#slash"/></svg>
    <a class="layout" href="#layout2">布局2</a><svg class="slash"><use href="#slash"/></svg>
    <button class="add" aria-label="新建布局"><svg width="14" height="14"><use href="#plus"/></svg></button><svg class="slash"><use href="#slash"/></svg>
  </nav>
  <div class="toggles">
    <div class="grp"><button class="st w30">模型</button></div>
    <div class="grp gap3"><button class="st on" aria-label="栅格"><svg class="i16" viewBox="0 0 16 16"><path d="M0 4.500h16M0 8.500h16M0 12.500h16M4.500 0v16M8.500 0v16M12.500 0v16" stroke="#fff" stroke-width="1.200"/></svg></button><button class="st" aria-label="捕捉"><svg class="i16" viewBox="0 0 16 16"><path d="M2 3.500h12M2 8.500h12M2 13.500h12" stroke="#dcdcdc" stroke-width="2" stroke-dasharray="2 3"/></svg></button><button class="st w16" aria-label="捕捉设置"><svg class="cm"><use href="#caret-m"/></svg></button></div>
    <div class="grp gap3"><button class="st" aria-label="正交"><svg class="i16" viewBox="0 0 16 16"><path d="M.500 0v15.500H16M.500 9.500h5v6" class="w"/></svg></button><button class="st on" aria-label="极轴"><svg class="i16" viewBox="0 0 16 16"><path d="M13 9A6.500 6.500 0 1 1 10 2.500M7 9h9M7 9l7-8M11 5c1 1 1.500 2 1.500 4" fill="none" stroke="#fff" stroke-width="1.200"/></svg></button><button class="st w16" aria-label="极轴设置"><svg class="cm"><use href="#caret-m"/></svg></button><button class="st" aria-label="等轴测"><svg class="i16" viewBox="0 0 16 16"><path d="M2 1l12 13" stroke="#e0606a" stroke-width="1.200"/><path d="M8.500 0v15" stroke="#4cbf6a" stroke-width="1.200"/><circle cx="8.500" cy="8" r="1.200" fill="#fff"/></svg></button><button class="st w16" aria-label="等轴测设置"><svg class="cm"><use href="#caret-m"/></svg></button></div>
    <div class="grp gap1"><button class="st on" aria-label="对象捕捉追踪"><svg class="i16" viewBox="0 0 16 16"><path d="M0 14.500h16M2 14L15 2" stroke="#fff" stroke-width="1.200"/><circle cx="7" cy="10" r="2" fill="#fff"/></svg></button><button class="st on" aria-label="对象捕捉"><svg class="i16" viewBox="0 0 16 16"><path d="M7 2.500h8.500v13h-13V7M.500 .500h4v4h-4z" fill="none" stroke="#fff" stroke-width="1.200"/></svg></button><button class="st w16" aria-label="捕捉选项"><svg class="cm"><use href="#caret-m"/></svg></button></div>
    <div class="grp gap3"><button class="st on" aria-label="注释可见性"><svg class="i16" viewBox="0 0 16 16"><path d="M7 0l3 9 4 6-5-2-2 3-2-3-5 2 4-6z" fill="#fff"/><circle cx="13" cy="4" r="2.500" fill="none" stroke="#fff"/></svg></button><button class="st" aria-label="自动缩放"><svg class="i16" viewBox="0 0 16 16"><path d="M7 0l3 9 4 6-5-2-2 3-2-3-5 2 4-6zM12 0h3l-1 3h2l-5 5 1-4h-2z" fill="#d9d9d9"/></svg></button><button class="st" aria-label="注释比例"><svg class="i16" viewBox="0 0 16 16"><path d="M8 0l3 9 4 6-5-2-2 3-2-3-5 2 4-6z" fill="#d9d9d9"/></svg></button><button class="st w34">1:1<svg class="cm"><use href="#caret-m"/></svg></button></div>
    <div class="grp gap3"><button class="st" aria-label="工作空间"><svg class="i16" viewBox="0 0 16 16"><circle cx="8" cy="8" r="4.500" fill="none" stroke="#e0e0e0" stroke-width="3.500"/><path d="M8 0v3M8 13v3M0 8h3M13 8h3M2.500 2.500l2 2M11.500 11.500l2 2M13.500 2.500l-2 2M4.500 11.500l-2 2" stroke="#e0e0e0" stroke-width="3"/></svg></button><button class="st w16" aria-label="工作空间列表"><svg class="cm"><use href="#caret-m"/></svg></button></div>
    <div class="grp gap1"><button class="st" aria-label="注释监视器"><svg class="i16" viewBox="0 0 16 16"><path d="M8 0v16M0 8h16" stroke="#e0e0e0" stroke-width="2"/></svg></button></div>
    <div class="grp gap3"><button class="st" aria-label="隔离对象"><svg class="i16" viewBox="0 0 16 16"><path d="M.500 .500h6v6h-6z" class="w2"/><circle cx="13" cy="6.500" r="3" class="w2"/><path d="M7 10.500l3.500 5h-7z" class="w2"/></svg></button></div>
    <div class="grp gap3"><button class="st" aria-label="全屏显示"><svg class="i16" viewBox="0 0 16 16"><path d="M.500 2.500h15v11H.500z" class="w2"/><path d="M9 7l3-3M3.500 12l3-3M10 4.500h3v3M3 9v3h3" class="w2"/></svg></button></div>
    <div class="grp gap3"><button class="st" aria-label="自定义"><svg class="i16" viewBox="0 0 16 16"><path d="M0 2h16M0 8h16M0 14h16" stroke="#fff" stroke-width="2"/></svg></button></div>
  </div>
</footer>
<button class="edge" aria-label="侧边栏"></button>
<script src="grid.js"></script>
</body>
</html>
```
FILE: styles.css
```css
* { box-sizing: border-box; }

body {
  margin: 0;
  min-height: 100vh;
  display: flex;
  flex-direction: column;
  position: relative;
  border: 1px solid #0d8fd0;
  background: #222933;
  color: #f0f0f0;
  font: 12px/17px "Noto Sans", "Noto Sans CJK SC", sans-serif;
  overflow: hidden;
}

button, input, select {
  font: inherit;
  color: inherit;
  background: none;
  border: 0;
  padding: 0;
  margin: 0;
}

button { display: flex; align-items: center; justify-content: center; white-space: nowrap; }
a { color: inherit; text-decoration: none; }
svg { flex: none; display: block; }

.defs { position: absolute; width: 0; height: 0; }
.i16 { width: 16px; height: 16px; }
.i32 { width: 32px; height: 32px; }
.cs { width: 6px; height: 4px; color: #d0d3d8; }
.cm { width: 8px; height: 5px; color: #d0d3d8; }
.w { fill: none; stroke: #d9d9d9; }
.w2 { fill: none; stroke: #f0f0f0; stroke-width: 1.3; }
.b { fill: none; stroke: #6fc1ff; }
.fw { fill: #d9d9d9; }
.fb { fill: #6fc1ff; }
.fy { fill: #ffd27a; }

/* title bar */
.titlebar { display: flex; align-items: center; height: 35px; padding: 0 3px 2px 6px; }
.quick { display: flex; align-items: center; height: 24px; }
.app { gap: 3px; margin-right: 7px; }
.logo-a { font: bold 15px "Open Sans", sans-serif; fill: #fff; }
.tool { width: 24px; height: 24px; }
.drop { width: 12px; height: 24px; }
.custom { width: 16px; height: 24px; }
.share { gap: 5px; margin-left: 4px; color: #6fb9f2; }
.caption { flex: 1; margin: 0; padding-bottom: 3px; display: flex; justify-content: center; gap: 16px; font-size: 12px; font-weight: 400; }
.infocenter { display: flex; align-items: center; width: 460px; }
.search { width: 178px; height: 20px; margin: 0 6px; padding: 0 3px; background: #464f61; font-size: 11px; font-style: italic; }
.search::placeholder { color: #b4b9c2; }
.login { gap: 5px; margin-left: 9px; }
.g-auto { margin-left: 60px; }
.g12 { margin-left: 12px; }
.g8 { margin-left: 8px; }
.g4 { margin-left: 4px; }
.vsep { width: 1px; height: 18px; margin: 0 1px 0 10px; background: #46536a; }
.q { font: bold 12px "Noto Sans", sans-serif; fill: #222933; }
.winbtns { display: flex; }
.winbtns button { width: 46px; height: 32px; }

/* ribbon tabs */
.tabs { display: flex; height: 20px; padding-left: 6px; color: #a9adb3; }
.tab { height: 20px; padding: 0 9px; margin: 0 1px; }
.tab.on { background: #3b4453; color: #fff; }
.mini { gap: 4px; margin-left: 26px; }

/* ribbon */
.ribbon { display: flex; height: 99px; margin: 0 4px; background: #3b4453; }
.panel { display: flex; flex-direction: column; flex: none; border-right: 1px solid #222933; }
.body { display: flex; height: 79px; padding: 5px 0 0 2px; }
.ptitle { flex: 1; height: 20px; gap: 6px; }
.panel > .ptitle { flex: none; }
.foot { display: flex; padding-right: 2px; }
.launch { width: 10px; height: 20px; }
.p-draw { width: 211px; }
.p-modify { width: 227px; }
.p-modify .body { padding-left: 7px; }
.p-note { width: 156px; }
.p-note .body { padding-left: 5px; }
.p-layer { width: 253px; }
.p-layer .body { padding-left: 1px; }
.p-block { width: 191px; }
.p-block .body { padding-left: 0; }
.p-prop { width: 244px; }
.p-group { width: 68px; }
.p-group .body { padding-left: 1px; }
.p-util { width: 76px; }
.p-util .body { padding-left: 3px; }
.p-clip { width: 87px; }
.p-clip .body { padding-left: 3px; }
.p-view { width: 60px; border-right: 0; }

.big { flex-direction: column; justify-content: flex-start; width: 40px; height: 72px; padding-top: 3px; text-align: center; }
.big .i32 { margin-bottom: 3px; }
.big .cs { margin-top: 2px; }
.big.side { position: relative; }
.big.side .cs { position: absolute; right: 0; bottom: 14px; }
.w44 { width: 44px; }
.w56 { width: 56px; }
.col { display: flex; flex-direction: column; align-items: flex-start; }
.row { display: flex; align-items: center; justify-content: flex-start; height: 24px; gap: 5px; }
.row .cs { margin-left: 2px; }
.row.g3 .cs { margin-left: 3px; }
.row.far .cs { margin-left: 6px; }
.row.tight .cs { margin-left: 0; }
.row.sq { width: 24px; justify-content: center; }
.row.wide { width: auto; padding-left: 4px; }
.row.active { height: 22px; margin-top: 1px; border: 1px solid #6fc1ff; background: #46587a; }
.line { display: flex; }
.lead2 { padding-left: 2px; }
.lead6 { padding-left: 6px; }
.w59 { width: 59px; }
.w75 { width: 75px; }
.icons { width: 19px; padding-left: 1px; }
.fill { flex: 1; align-items: stretch; padding-right: 3px; }

.combo { display: flex; align-items: center; height: 22px; margin: 0 0 3px; padding: 0 2px 0 6px; background: #4e5a6e; border: 1px solid #2b3340; }
.combo select { flex: 1; min-width: 0; appearance: none; height: 20px; padding: 0 3px; }
.combo.layers { gap: 5px; margin-bottom: 2px; }
.combo.layers select { padding: 0; }
.swatch { background: #fff; flex: none; border: 1px solid #c8c8c8; }
.s14 { width: 14px; height: 14px; }
.s16 { width: 16px; height: 16px; }
.rule { width: 64px; height: 1px; background: #fff; }

/* document tabs */
.files { display: flex; align-items: flex-end; height: 27px; }
.burger { width: 46px; height: 24px; padding-left: 8px; }
.slash { width: 8px; height: 18px; }
.files .slash { margin: 0 0 3px; }
.file { height: 24px; line-height: 24px; padding: 0 7px; }
.file.cur { display: flex; align-items: center; gap: 9px; padding: 0 11px 0 17px; font-weight: 700; background: #3b4453; clip-path: polygon(10px 0, 100% 0, calc(100% - 10px) 100%, 0 100%); }
.add { width: 34px; height: 24px; }

/* drawing area */
.view { flex: 1; position: relative; margin: 0 3px; border: solid #3b4453; border-width: 5px 4px 4px 1px; background: #212830; overflow: hidden; }
#grid { position: absolute; left: 0; top: 0; width: 100%; height: 100%; }
.vplabel { position: absolute; left: 3px; top: 5px; display: flex; gap: 2px; color: #fff; }
.vpbtns { position: absolute; right: 11px; top: 10px; display: flex; gap: 10px; }
.cube { position: absolute; right: 17px; top: 40px; display: flex; flex-direction: column; align-items: center; gap: 21px; }
.dir { font: 500 18px "Noto Sans CJK SC", sans-serif; fill: #a3a6aa; text-anchor: middle; }
.top { font: 30px "Noto Sans CJK SC", sans-serif; fill: #5e646d; text-anchor: middle; }
.wcs { gap: 6px; width: 48px; height: 18px; border-radius: 4px; background: #979aa8; border: 1px solid #7e818d; color: #4a4d57; font: 11px "Liberation Sans", sans-serif; }
.navbar { position: absolute; right: 4px; top: 236px; width: 32px; border-radius: 3px; background: rgba(147, 148, 148, 0.5); fill: none; stroke: #44494f; }
.cross { position: absolute; left: 62.5%; top: 307px; }
.ucs { position: absolute; left: 16px; bottom: 13px; font: 300 18px "Noto Sans", sans-serif; fill: #fff; }
.cmd { position: absolute; left: 20.1%; right: 20%; bottom: 1px; height: 25px; display: flex; }
.cmdtools { display: flex; align-items: center; width: 56px; padding-left: 2px; gap: 8px; background: #282f3b; }
.cmdbox { flex: 1; display: flex; align-items: center; gap: 2px; padding: 0 4px; background: #bcbdbf; color: #55585c; }
.cmdbox .cm { color: #55585c; }
.cmdbox input { flex: 1; height: 24px; padding: 0 0 2px 5px; font-size: 13px; font-style: italic; }
.cmdbox input::placeholder { color: #66696d; }

/* status bar */
.status { display: flex; justify-content: space-between; align-items: flex-start; height: 32px; padding-right: 5px; }
.layouts { display: flex; align-items: center; height: 24px; }
.layout { height: 24px; line-height: 24px; padding: 0 8px; }
.layout.cur { padding: 0 17px; margin: 0 -1px 0 -2px; font-weight: 700; background: #3b4453; clip-path: polygon(10px 0, 100% 0, calc(100% - 10px) 100%, 0 100%); }
.toggles { display: flex; padding-top: 2px; }
.grp { display: flex; background: #3b4453; }
.gap3 { margin-left: 3px; }
.gap1 { margin-left: 1px; }
.st { width: 24px; height: 24px; gap: 3px; }
.st.on { background: #5f8ec2; background-clip: padding-box; border-right: 1px solid #3b4453; border-left: 1px solid #3b4453; }
.st.w16 { width: 16px; }
.st.w30 { width: 30px; }
.st.w34 { width: 34px; }

.edge { position: absolute; right: -1px; top: 756px; width: 8px; height: 48px; border-radius: 4px 0 0 4px; background: linear-gradient(#4cc3ff, #14a0f0); }
```
FILE: grid.js
```js
// Paints the drawing grid: minor lines every fifth of a major cell.
(function () {
  var view = document.getElementById('view');
  var canvas = document.getElementById('grid');
  var MAJOR = 94.4, ORIGIN_X = 78, ORIGIN_Y = 8;

  function draw() {
    var w = canvas.width = view.clientWidth;
    var h = canvas.height = view.clientHeight;
    var ctx = canvas.getContext('2d');
    [false, true].forEach(function (major) {
      ctx.fillStyle = major ? '#2f3747' : '#262d38';
      for (var i = -5; i * MAJOR / 5 < w; i++) {
        if ((i % 5 === 0) !== major) continue;
        var x = Math.round(ORIGIN_X + i * MAJOR / 5);
        var y = Math.round(ORIGIN_Y + i * MAJOR / 5);
        ctx.fillRect(x, 0, 1, h);
        ctx.fillRect(0, y, w, 1);
      }
    });
  }
  draw();
  window.addEventListener('resize', draw);
})();
```
